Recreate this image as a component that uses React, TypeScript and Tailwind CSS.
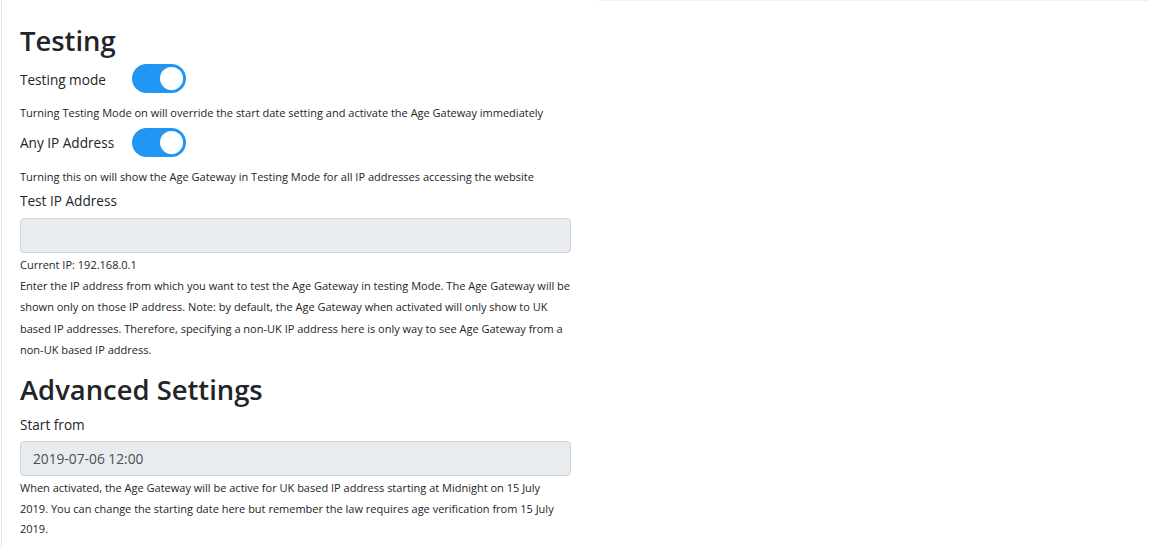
import React, { useState } from "react";

const Toggle = ({ on, onChange }: { on: boolean; onChange: (v: boolean) => void }) => (
  <button
    type="button"
    onClick={() => onChange(!on)}
    className={`flex h-[29px] w-[54px] items-center rounded-full px-[3px] ${
      on ? "justify-end bg-[#2196f3]" : "justify-start bg-[#ccc]"
    }`}
  >
    <span className="block h-[23px] w-[23px] rounded-full bg-white" />
  </button>
);

const App = () => {
  const [testing, setTesting] = useState(true);
  const [anyIp, setAnyIp] = useState(true);

  return (
    <div
      className="flex min-h-screen bg-white text-[#212529]"
      style={{ fontFamily: '"Open Sans", "Noto Sans", sans-serif' }}
    >
      {/* settings column */}
      <div className="ml-px w-[597px] border-l border-[#e6e6e6] pl-[18px] pr-[27px]">
        <h2 className="mt-[22px] h-[38px] text-[27.4px] leading-[38px] font-semibold">Testing</h2>
        <div className="mt-[4px] flex h-[29px] items-center">
          <span className="w-[112px] pt-[3px] text-[13.6px]">Testing mode</span>
          <Toggle on={testing} onChange={setTesting} />
        </div>
        <p className="mt-[10px] h-[20px] text-[11px] leading-[20px]">
          Turning Testing Mode on will override the start date setting and activate the Age Gateway immediately
        </p>
        <div className="mt-[5px] flex h-[29px] items-center">
          <span className="w-[112px] pt-[2px] text-[13.6px]">Any IP Address</span>
          <Toggle on={anyIp} onChange={setAnyIp} />
        </div>
        <p className="mt-[10px] h-[20px] text-[11px] leading-[20px]">
          Turning this on will show the Age Gateway in Testing Mode for all IP addresses accessing the website
        </p>
        <label className="mt-[3px] block h-[22px] text-[13.6px] leading-[22px]">Test IP Address</label>
        <input
          disabled
          className="mt-[6px] block h-[35px] w-[551px] rounded border border-[#ced4da] bg-[#e9ecef] px-3"
        />
        <p className="mt-[2px] h-[20px] text-[11px] leading-[20px]">Current IP: 192.168.0.1</p>
        <p className="text-[11px] leading-[21.3px]">
          Enter the IP address from which you want to test the Age Gateway in testing Mode. The Age Gateway will be
          shown only on those IP address. Note: by default, the Age Gateway when activated will only show to UK
          based IP addresses. Therefore, specifying a non-UK IP address here is only way to see Age Gateway from a
          non-UK based IP address.
        </p>

        <h2 className="mt-[11px] h-[38px] text-[27.4px] leading-[38px] font-semibold">Advanced Settings</h2>
        <label className="mt-[5px] block h-[22px] text-[13.6px] leading-[22px]">Start from</label>
        <input
          disabled
          value="2019-07-06 12:00"
          readOnly
          className="mt-[5px] block h-[35px] w-[551px] rounded border border-[#ced4da] bg-[#e9ecef] px-3 text-[13.75px] text-[#495057]"
        />
        <p className="mt-[2px] text-[11px] leading-[20.5px]">
          When activated, the Age Gateway will be active for UK based IP address starting at Midnight on 15 July
          2019. You can change the starting date here but remember the law requires age verification from 15 July
          2019.
        </p>
      </div>

      {/* right column */}
      <div className="mr-[6px] flex-1 border-t border-[#f3eef2]" />
    </div>
  );
};

export default App;
